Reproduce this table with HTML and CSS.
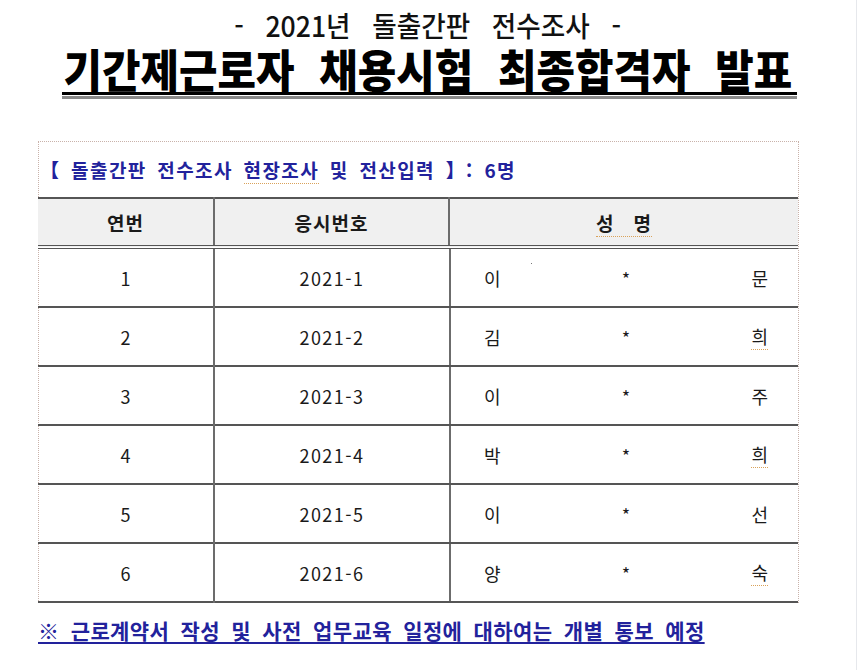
FILE: index.html
```html
<!DOCTYPE html>
<html lang="ko">
<head>
<meta charset="utf-8">
<title>기간제근로자 채용시험 최종합격자 발표</title>
<link rel="stylesheet" href="styles.css">
</head>
<body>
<div class="page">
  <header class="head">
    <div class="sub">- 2021년 돌출간판 전수조사 -</div>
    <h1 class="title">기간제근로자 채용시험 최종합격자 발표</h1>
    <div class="rule"></div>
  </header>

  <section class="box">
    <div class="caption">【 돌출간판 전수조사 <span class="spell">현장조사</span> 및 전산입력 】: 6명</div>
    <table class="list">
      <thead>
        <tr><th class="c1">연번</th><th class="c2">응시번호</th><th class="c3"><span class="spell">성&nbsp;&nbsp;&nbsp;명</span></th></tr>
      </thead>
      <tbody>
        <tr><td>1</td><td>2021-1</td><td class="name"><span>이</span><span>*</span><span>문</span><i class="speck"></i></td></tr>
        <tr><td>2</td><td>2021-2</td><td class="name"><span>김</span><span>*</span><span class="spell">희</span></td></tr>
        <tr><td>3</td><td>2021-3</td><td class="name"><span>이</span><span>*</span><span>주</span></td></tr>
        <tr><td>4</td><td>2021-4</td><td class="name"><span>박</span><span>*</span><span class="spell">희</span></td></tr>
        <tr><td>5</td><td>2021-5</td><td class="name"><span>이</span><span>*</span><span>선</span></td></tr>
        <tr><td>6</td><td>2021-6</td><td class="name"><span>양</span><span>*</span><span class="spell">숙</span></td></tr>
      </tbody>
    </table>
  </section>

  <p class="note">※ 근로계약서 작성 및 사전 업무교육 일정에 대하여는 개별 통보 예정</p>
</div>
</body>
</html>
```

FILE: styles.css
```css
html, body {
  margin: 0;
  padding: 0;
  background: #ffffff;
}
body {
  font-family: "Noto Sans CJK KR", "Noto Sans", sans-serif;
  color: #111;
}
.page {
  width: 857px;
  height: 670px;
  border-right: 1px solid #e6e8ec;
  box-sizing: border-box;
  position: relative;
}
.head {
  display: flex;
  flex-direction: column;
  align-items: center;
  padding-top: 10px;
}
.sub {
  font-size: 28px;
  line-height: 30px;
  font-weight: 500;
  word-spacing: 15px;
  transform: scaleX(0.95);
}
.title {
  margin: 7px 0 0;
  font-size: 45px;
  line-height: 44px;
  font-weight: 900;
  word-spacing: 14px;
  transform: scaleX(0.93);
  color: #000;
}
.rule {
  width: 735px;
  height: 3px;
  background: #000;
  margin-top: 1px;
  margin-left: 2px;
  border-bottom: 1px solid #fff;
  box-shadow: 0 3px 0 0 #8a8a8a;
}
.box {
  margin: 45px 0 0 38px;
  width: 761px;
  border-top: 1px dotted #c9b2aa;
  border-left: 1px dotted #c9b2aa;
  border-right: 1px dotted #c9b2aa;
  box-sizing: border-box;
}
.caption {
  color: #22229c;
  font-weight: 700;
  font-size: 19px;
  line-height: 24px;
  padding: 16px 0 15px 1px;
  letter-spacing: 1.4px;
  word-spacing: 4px;
}
.spell {
  border-bottom: 1px dotted #d9a25a;
}
.list {
  width: 760px;
  margin-left: -1px;
  border-collapse: collapse;
  table-layout: fixed;
}
.list th, .list td {
  text-align: center;
  padding: 0;
  border-left: 2px solid #6c6c6c;
}
.list th:first-child, .list td:first-child {
  border-left: none;
}
.c1 { width: 175px; }
.c2 { width: 233px; }
.list thead tr {
  background: #f0f0f0;
  border-top: 2px solid #555;
  border-bottom: 4px double #555;
}
.list th {
  height: 46px;
  font-size: 19px;
  font-weight: 700;
  color: #1a1a1a;
  letter-spacing: 1px;
}
.list tbody tr {
  border-bottom: 2px solid #555;
}
.list td {
  height: 57px;
  font-size: 18px;
  color: #1a1a1a;
}
.list tbody tr td:nth-child(2) {
  letter-spacing: 1.5px;
}
.list td.name {
  position: relative;
  display: flex;
  justify-content: space-between;
  align-items: center;
  padding: 0 30px 0 33px;
  box-sizing: border-box;
  height: 57px;
}
.speck {
  position: absolute;
  left: 80px;
  top: 14px;
  width: 1px;
  height: 1px;
  background: #777;
}
.note {
  margin: 13px 0 0 38px;
  font-size: 21px;
  line-height: 28px;
  font-weight: 700;
  color: #22229c;
  letter-spacing: 0.4px;
  word-spacing: 5px;
  text-decoration: underline;
  text-decoration-thickness: 2px;
  text-underline-offset: 3px;
}
```
